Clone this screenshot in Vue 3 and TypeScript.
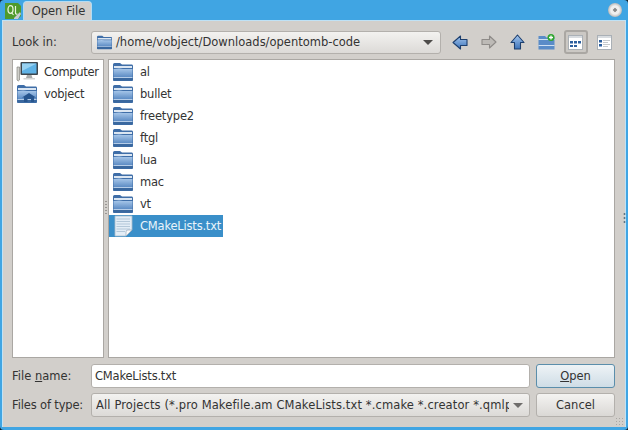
<script setup lang="ts">
const folders: string[] = ['al', 'bullet', 'freetype2', 'ftgl', 'lua', 'mac', 'vt']
</script>

<template>
  <div class="window">
    <svg class="defs" width="0" height="0">
      <defs>
        <linearGradient id="fb" x1="0" y1="0" x2="0" y2="1">
          <stop offset="0" stop-color="#a9c8ea" />
          <stop offset="1" stop-color="#5d8cc4" />
        </linearGradient>
        <linearGradient id="arr" x1="0" y1="0" x2="0" y2="1">
          <stop offset="0" stop-color="#a4c6ee" />
          <stop offset="1" stop-color="#3d74ba" />
        </linearGradient>
        <symbol id="folder" viewBox="0 0 22 20">
          <path d="M1 2.500 Q1 1 2.500 1 H8 L10 2.500 H20 Q21 2.500 21 4 V18 Q21 19 20 19 H2 Q1 19 1 18 Z" fill="#3f6ea8" />
          <path d="M2 4 H20 V6 H2 Z" fill="#dbe6f2" />
          <path d="M1.500 7 Q8 6 11 7 H20.500 V15 H1.500 Z" fill="url(#fb)" />
          <path d="M1.500 15 H20.500 V18.500 H1.500 Z" fill="#3a689f" />
          <path d="M1.500 15 H20.500 V16 H1.500 Z" fill="#b6cde8" />
        </symbol>
      </defs>
    </svg>

    <header class="titlebar">
      <svg class="qt" width="16" height="17" viewBox="0 0 16 17">
        <path d="M0 1 H13 L16 4 V14 L13 17 H0 Z" fill="#4f9a2c" />
        <ellipse cx="5.500" cy="7.500" rx="2.500" ry="3.800" fill="none" stroke="#e8f3dc" stroke-width="1.300" />
        <path d="M6.500 10.500 L8.500 13 M10.500 4 V11 Q10.500 12.500 12.500 12" fill="none" stroke="#e8f3dc" stroke-width="1.200" />
        <path d="M9 16 L15 10 L16 12 L13 17 H9 Z" fill="#c7ccd0" />
      </svg>
      <div class="tab">Open File</div>
      <div class="spacer"></div>
      <div class="close"></div>
    </header>

    <main class="body">
      <div class="row lookin">
        <label class="lbl">Look in:</label>
        <div class="combo path">
          <svg class="cicon" width="17" height="15"><use href="#folder" /></svg>
          <span class="ctext">/home/vobject/Downloads/opentomb-code</span>
          <i class="arrow dark"></i>
        </div>
        <div class="tools">
          <button class="tool">
            <svg width="16" height="15" viewBox="0 0 16 15"><path d="M1 7.500 L8.500 1 V4.500 H15 V10.500 H8.500 V14 Z" fill="url(#arr)" stroke="#1d3f6e" stroke-width="1.100" stroke-linejoin="round" /></svg>
          </button>
          <button class="tool">
            <svg width="16" height="14" viewBox="0 0 16 14"><path d="M15 7 L8.500 1 V4.500 H1 V9.500 H8.500 V13 Z" fill="#bdbab6" stroke="#8e8b88" stroke-width="1.100" stroke-linejoin="round" /></svg>
          </button>
          <button class="tool">
            <svg width="15" height="16" viewBox="0 0 15 16"><path d="M7.500 1 L14 8.500 H10.500 V15 H4.500 V8.500 H1 Z" fill="url(#arr)" stroke="#1d3f6e" stroke-width="1.100" stroke-linejoin="round" /></svg>
          </button>
          <button class="tool">
            <svg width="17" height="16" viewBox="0 0 17 16">
              <path d="M.5 2 H7 L8.500 3.500 H16.500 V15.500 H.5 Z" fill="#5a8cc8" />
              <path d="M.5 5 H16.500 V6 H.5 Z M.5 11 H16.500 V12 H.5 Z" fill="#cfe0f2" />
              <circle cx="13" cy="3.500" r="3.500" fill="#2fa52f" />
              <path d="M13 1.500 V5.500 M11 3.500 H15" stroke="#fff" stroke-width="1.300" />
            </svg>
          </button>
          <button class="tool on">
            <svg width="15" height="15" viewBox="0 0 15 15">
              <rect x=".5" y=".5" width="14" height="14" fill="#fff" stroke="#aab0b6" />
              <rect x="1" y="1" width="13" height="2" fill="#d8dce0" />
              <path d="M2 6 H5 V8.500 H2 Z M6 6 H9 V8.500 H6 Z M10 6 H13 V8.500 H10 Z M2 10 H5 V12 H2 Z M6 10 H9 V12 H6 Z" fill="#2c5f9e" />
            </svg>
          </button>
          <button class="tool">
            <svg width="15" height="15" viewBox="0 0 15 15">
              <rect x=".5" y=".5" width="14" height="14" fill="#fff" stroke="#aab0b6" />
              <rect x="1" y="1" width="13" height="2" fill="#d8dce0" />
              <path d="M2 5 H5 V7.500 H2 Z M2 9 H5 V11.500 H2 Z" fill="#2c5f9e" />
              <path d="M6 5.500 H13 M6 7.500 H11 M6 9.500 H13 M6 11.500 H11" stroke="#b8bcc0" stroke-width=".8" />
            </svg>
          </button>
        </div>
      </div>

      <div class="panes">
        <aside class="side pane">
          <div class="side-item">
            <svg width="22" height="20" viewBox="0 0 22 20">
              <path d="M1 5 H3.500 V18 Q2.200 20 1 18 Z" fill="#cfcfca" stroke="#77766f" stroke-width=".6" />
              <rect x="4.500" y="0" width="17.500" height="13" rx="1" fill="#3d464e" />
              <rect x="6" y="1.500" width="14.500" height="10" fill="#5fb2e6" />
              <path d="M6 1.500 H20.500 L6 9 Z" fill="#98d2f2" />
              <path d="M11 13 H15.500 L16.500 16 H10 Z" fill="#a9abab" />
              <path d="M7.500 16 H19 V17.500 H7.500 Z" fill="#d2d3d3" />
            </svg>
            <span class="n1">Computer</span>
          </div>
          <div class="side-item">
            <svg width="22" height="20" viewBox="0 0 22 20">
              <use href="#folder" />
              <path d="M6 13.500 L13 9 L20 13.500 H18 V18 H15 V15 H11.500 V18 H8 V13.500 Z" fill="#27558e" />
            </svg>
            <span class="n1">vobject</span>
          </div>
        </aside>
        <div class="sash" aria-hidden="true"></div>
        <section class="files pane">
          <div v-for="f in folders" :key="f" class="file">
            <svg class="ficon" width="22" height="20"><use href="#folder" /></svg>
            <span class="fname">{{ f }}</span>
          </div>
          <div class="file selected">
            <svg class="ficon" width="22" height="22" viewBox="0 0 22 22">
              <path d="M3 1 H20 V15 L14 21 H3 Z" fill="#e3edf6" stroke="#a9bccd" stroke-width=".8" />
              <path d="M4.500 4 H18 M4.500 6.500 H18 M4.500 9 H18 M4.500 11.500 H18 M4.500 14 H18 M4.500 16.500 H13" stroke="#9fb7cd" stroke-width=".7" />
              <path d="M20 15 L14 21 V17 Q14 15 16 15 Z" fill="#fafafa" stroke="#8fa3b6" stroke-width=".6" />
            </svg>
            <span class="fname">CMakeLists.txt</span>
          </div>
        </section>
      </div>

      <div class="row fname-row">
        <label class="lbl">File <u>n</u>ame:</label>
        <div class="input">CMakeLists.txt</div>
        <button class="btn default"><u>O</u>pen</button>
      </div>
      <div class="row type-row">
        <label class="lbl tight">Files of type:</label>
        <div class="combo type">
          <span class="ctext clip wide">All Projects (*.pro Makefile.am CMakeLists.txt *.cmake *.creator *.qmlproject)</span>
          <i class="arrow"></i>
        </div>
        <button class="btn">Cancel</button>
      </div>
      <div class="grip" aria-hidden="true"></div>
      <div class="edge" aria-hidden="true"></div>
    </main>
  </div>
</template>

<style>
html, body { background: #15212a; }
</style>

<style scoped>
.window {
  width: 628px;
  height: 430px;
  box-sizing: border-box;
  background: #40a5e3;
  display: flex;
  flex-direction: column;
  font-family: "DejaVu Sans", sans-serif;
  font-size: 11.500px;
  color: #333;
  overflow: hidden;
  border-radius: 4px;
}
.defs { position: absolute; }
.titlebar {
  height: 20px;
  flex: none;
  display: flex;
  align-items: flex-end;
  padding: 0 6px 0 5px;
  box-sizing: border-box;
}
.qt { margin-bottom: 1px; margin-right: 2px; }
.tab {
  width: 69px;
  height: 19px;
  box-sizing: border-box;
  background: #d2cfcb;
  border: 1px solid #b4dcf3;
  border-bottom: none;
  border-radius: 4px 4px 0 0;
  text-align: center;
  line-height: 19px;
  padding-left: 2px;
  color: #333;
}
.spacer { flex: 1; }
.close {
  width: 14px;
  height: 14px;
  margin-bottom: 3px;
  border-radius: 50%;
  background: radial-gradient(circle at 50% 50%, #8a8a8a 0 1.500px, #e9e9e9 2px, #f2f2f2 4px, #b9b9b9 7px);
}
.body {
  position: relative;
  flex: 1;
  margin: 0 2px 3px;
  padding: 9px 10px 0 9px;
  background: #d2cfcb;
  border: 1px solid #bfe2f6;
  border-bottom: none;
  display: flex;
  flex-direction: column;
  box-sizing: border-box;
}
.row { display: flex; align-items: center; }
.lbl { width: 79px; flex: none; color: #333; }
.tight { letter-spacing: -0.150px; }
.combo {
  height: 23px;
  box-sizing: border-box;
  border: 1px solid #b3b0ac;
  border-radius: 3px;
  background: linear-gradient(#f3f2f0, #dcdad7);
  display: flex;
  align-items: center;
}
.path { width: 350px; padding: 0 7px 0 4px; }
.cicon { margin-right: 3px; flex: none; }
.ctext { flex: 1; white-space: nowrap; min-width: 0; }
.clip { overflow: hidden; }
.wide { letter-spacing: 0.120px; }
.arrow {
  flex: none;
  width: 0;
  height: 0;
  border-left: 5px solid transparent;
  border-right: 5px solid transparent;
  border-top: 5px solid #6f6d6b;
  margin-left: 4px;
}
.arrow.dark { border-top-color: #4e4c4a; }
.tools { display: flex; margin-left: 4px; margin-right: -4px; }
.tool {
  width: 24px;
  height: 24px;
  margin: 0 2.500px;
  padding: 0;
  border: 2px solid transparent;
  background: none;
  display: flex;
  align-items: center;
  justify-content: center;
  border-radius: 3px;
  box-sizing: border-box;
  flex: none;
}
.tool.on { border-color: #aaa7a3; background: #cbc8c4; }
.panes {
  display: flex;
  height: 299px;
  margin-top: 5px;
}
.pane {
  background: #fff;
  border: 1px solid #aaa7a3;
  box-sizing: border-box;
  height: 100%;
}
.side { width: 92px; padding: 1px 0 0 3px; flex: none; }
.side-item { display: flex; align-items: center; height: 22px; gap: 6px; white-space: nowrap; }
.n1 { letter-spacing: -0.300px; }
.sash {
  width: 4px;
  flex: none;
  background: radial-gradient(circle, #9a9794 .7px, transparent 1px) 0 0 / 4px 3px repeat-y;
  clip-path: inset(142px 0 142px 0);
}
.files { flex: 1; padding-top: 1px; min-width: 0; }
.file { display: flex; align-items: center; height: 22px; width: max-content; padding: 0 2px 0 3px; }
.ficon { flex: none; margin-right: 6px; }
.fname { white-space: nowrap; letter-spacing: -0.200px; }
.selected { background: #3a8fc9; color: #e9f4fb; }
.fname-row { margin-top: 6px; height: 24px; }
.type-row { margin-top: 5px; height: 24px; }
.input {
  width: 439px;
  height: 24px;
  box-sizing: border-box;
  background: #fff;
  border: 1px solid #b3b0ac;
  border-radius: 3px;
  padding-left: 3px;
  line-height: 22px;
  letter-spacing: -0.200px;
  color: #333;
}
.type { width: 439px; height: 24px; padding: 0 6px 0 4px; }
.btn {
  margin-left: 6px;
  width: 79px;
  height: 24px;
  box-sizing: border-box;
  border: 1px solid #b3b0ac;
  border-radius: 3px;
  background: linear-gradient(#f4f3f1, #dad8d5);
  font: inherit;
  color: #333;
  padding: 0;
}
.btn.default {
  border-color: #5b8eab;
  background: linear-gradient(#eef3f6, #cfdde6);
}
.grip {
  position: absolute;
  right: 0;
  bottom: 0;
  width: 10px;
  height: 10px;
  background: radial-gradient(circle, #aaa7a3 .7px, transparent 1px) 0 0 / 3px 3px;
}
.edge {
  position: absolute;
  right: -1px;
  top: 191px;
  width: 3px;
  height: 12px;
  background: radial-gradient(circle, #5f7482 .9px, transparent 1.200px) 0 0 / 3px 4px;
}
</style>
